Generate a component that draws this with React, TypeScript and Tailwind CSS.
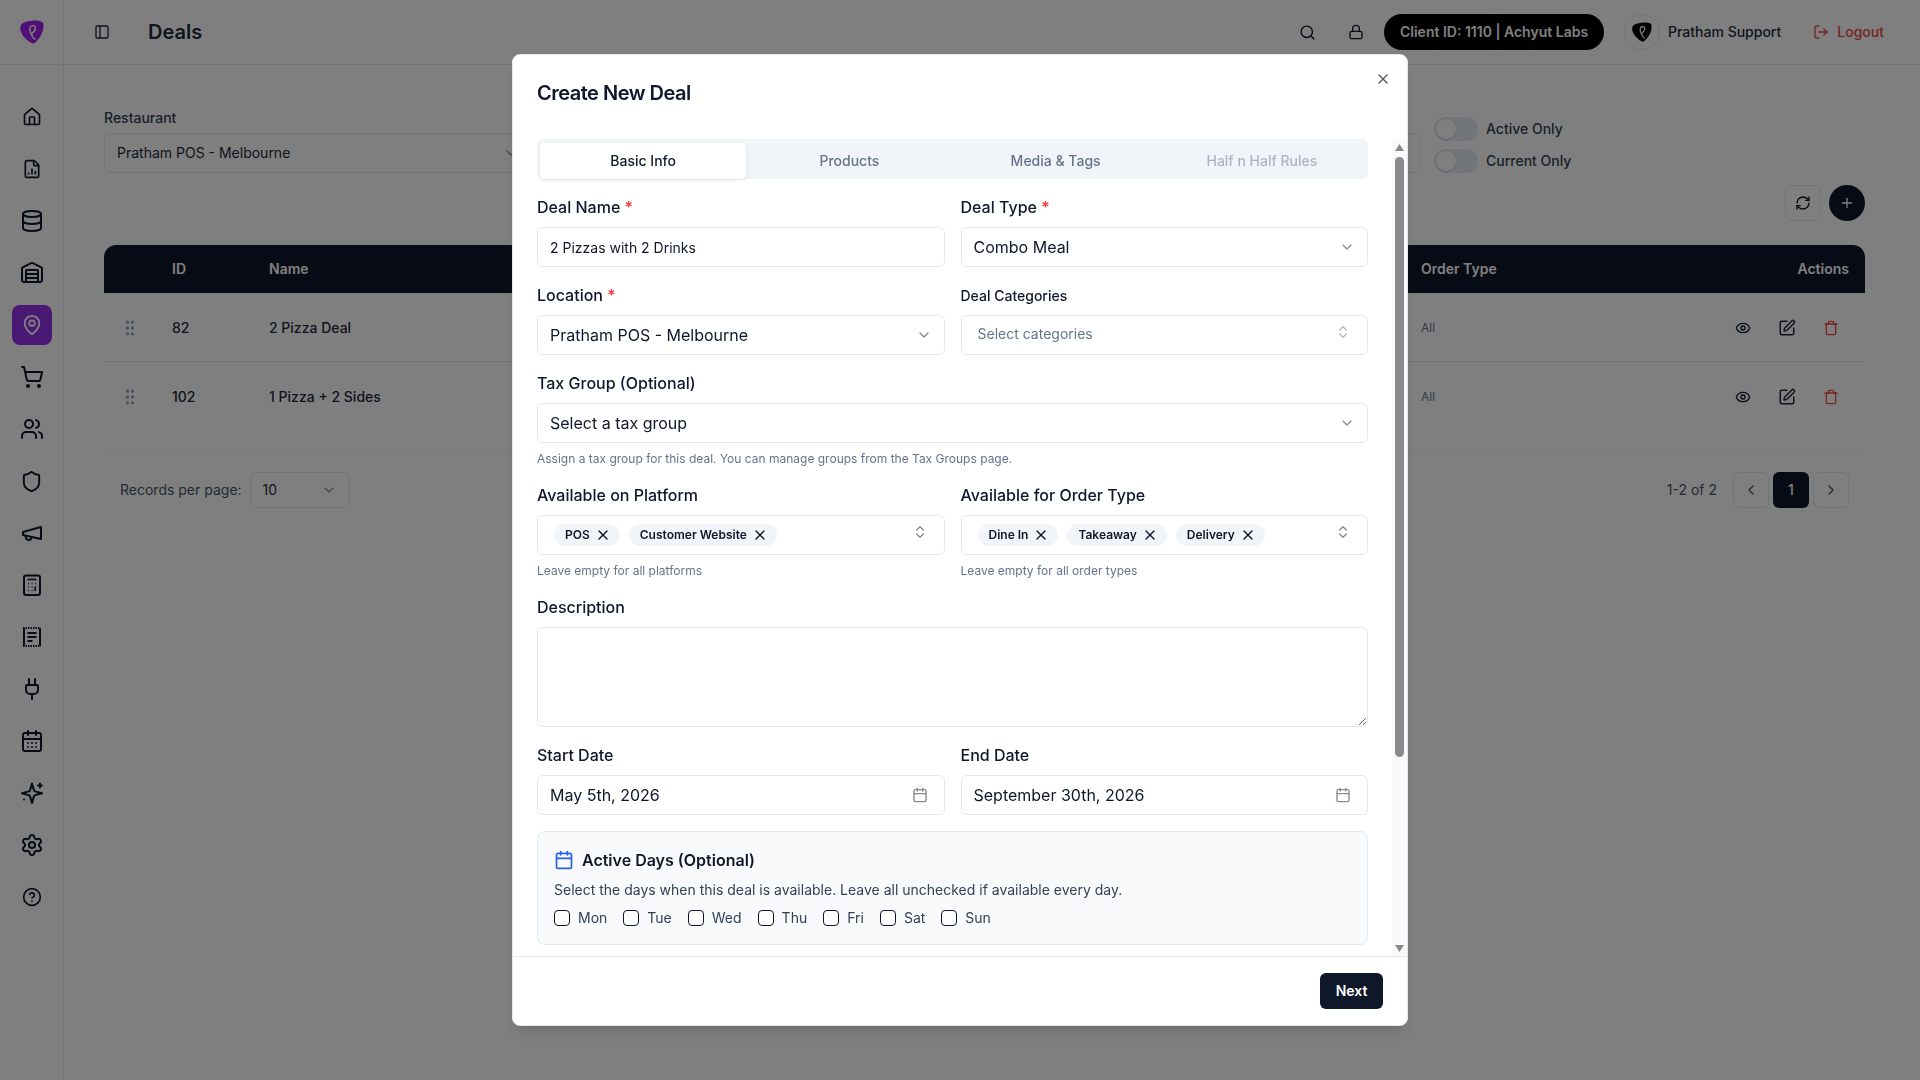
import React from "react";
import {
  House, FileChartColumn, Database, Warehouse, MapPin, ShoppingCart, Users, Shield, Plug,
  CalendarDays, Settings, CircleHelp, PanelLeft, Search, Lock, LogOut, ChevronDown, ChevronsUpDown,
  ChevronLeft, ChevronRight, Calendar, X, GripVertical, Eye, SquarePen, Trash, RefreshCw, Plus,
} from "lucide-react";

function Pick({ fill, size }: { fill: string; size: number }) {
  return (
    <svg width={size} height={size} viewBox="0 0 24 24">
      <path d="M2 3.5C8 .3 18 -.5 23 2.4c2.2 7-3 16.8-9.5 21.4C7 21.8 -1.8 12.4 .6 6c.2-1 .6-1.8 1.4-2.5Z" fill={fill} />
      <path d="M12.5 15.5C8.8 12.5 9 6 12.6 5.6c3.7-.3 3.7 5-.3 7.2-1.5 1.2-.4 4.5 2.6 6.4" fill="none" stroke="#fff" strokeWidth="1.4" strokeLinecap="round" />
    </svg>
  );
}

function CalcIcon() {
  return (
    <svg width="24" height="24" viewBox="0 0 24 24" fill="none" stroke="currentColor" strokeWidth="2">
      <rect x="4" y="2.5" width="16" height="19.5" rx="2" />
      <path d="M7.5 6.5h9" strokeWidth="1.6" />
      <path d="M8 10.5h.9M11.6 10.5h.9M15.2 10.5h.9M8 14h.9M11.6 14h.9M15.2 14h.9M8 17.5h.9M11.6 17.5h.9M15.2 14v4" strokeWidth="1.6" />
    </svg>
  );
}

function ReceiptIcon() {
  return (
    <svg width="24" height="24" viewBox="0 0 24 24" fill="none" stroke="currentColor" strokeWidth="2">
      <path d="M4 3.5v17M20 3.5v17" />
      <path d="M3 3h18M3 21h18" strokeDasharray="1.5 1" />
      <path d="M7.5 8h9M7.5 12h9M7.5 16h5" strokeWidth="1.8" />
    </svg>
  );
}

function MegaphoneIcon() {
  return (
    <svg width="24" height="24" viewBox="0 0 24 24" fill="none" stroke="currentColor" strokeWidth="2" strokeLinecap="round" strokeLinejoin="round">
      <path d="m3 11 18-5v12L3 14v-3z" />
      <path d="M11.6 16.8a3 3 0 1 1-5.8-1.6" />
    </svg>
  );
}

function SparkleIcon() {
  return (
    <svg width="24" height="24" viewBox="0 0 24 24" fill="none" stroke="currentColor" strokeWidth="2" strokeLinecap="round" strokeLinejoin="round">
      <path d="m12 2.5-1.9 6.6a2 2 0 0 1-1.3 1.3L2 12.2l6.8 1.9a2 2 0 0 1 1.3 1.3l1.9 6.6 1.9-6.6a2 2 0 0 1 1.3-1.3l6.8-1.9-6.8-1.8a2 2 0 0 1-1.3-1.3L12 2.5Z" />
      <path d="M20 2.5v4M18 4.5h4" />
      <path d="M4 18.5h.01" />
    </svg>
  );
}

const navIcons: React.ReactNode[] = [
  <House size={20} />,
  <FileChartColumn size={20} />,
  <Database size={24} />,
  <Warehouse size={24} />,
  <MapPin size={22} />,
  <ShoppingCart size={24} />,
  <Users size={24} />,
  <Shield size={23} />,
  <MegaphoneIcon />,
  <CalcIcon />,
  <ReceiptIcon />,
  <Plug size={24} />,
  <CalendarDays size={24} />,
  <SparkleIcon />,
  <Settings size={24} />,
  <CircleHelp size={20} />,
];

function Label({ text, req, small }: { text: string; req?: boolean; small?: boolean }) {
  return (
    <div className={`${small ? "text-sm pt-px" : "text-base"} h-6 leading-6 font-medium text-[#0f172a] mb-2`}>
      {text}
      {req && <span className="text-red-500"> *</span>}
    </div>
  );
}

function SelectBox({ value }: { value: string }) {
  return (
    <div className="h-10 flex items-center justify-between px-3 border border-[#e2e8f0] rounded-md bg-white text-base text-[#0f172a]">
      <span>{value}</span>
      <ChevronDown size={16} className="opacity-50" />
    </div>
  );
}

function DateBox({ value }: { value: string }) {
  return (
    <div className="h-10 flex items-center justify-between pl-3 pr-4 border border-[#e2e8f0] rounded-md bg-white text-base text-[#0f172a]">
      <span>{value}</span>
      <Calendar size={16} className="opacity-50" />
    </div>
  );
}

function Chip({ text }: { text: string }) {
  return (
    <span className="h-[22px] flex items-center gap-[5px] pl-[11px] pr-[9px] rounded-full bg-[#f1f5f9] text-xs font-semibold text-[#0f172a]">
      {text}
      <X size={16} strokeWidth={2} />
    </span>
  );
}

function MultiBox({ children }: { children: React.ReactNode }) {
  return (
    <div className="h-10 flex items-center justify-between pl-4 pr-4 border border-[#e2e8f0] rounded-md bg-white">
      <div className="flex items-center gap-[9px]">{children}</div>
      <ChevronsUpDown size={16} className="opacity-50 -mt-[6px]" />
    </div>
  );
}

function Toggle({ label }: { label: string }) {
  return (
    <div className="flex items-center gap-2">
      <span className="w-11 h-6 rounded-full bg-[#e2e8f0] p-0.5 flex">
        <span className="w-5 h-5 rounded-full bg-white shadow" />
      </span>
      <span className="text-sm font-medium text-[#334155]">{label}</span>
    </div>
  );
}

function Row({ id, name, last }: { id: string; name: string; last?: boolean }) {
  return (
    <div className={`grid grid-cols-[68px_97px_1fr_444px] h-[69px] items-center text-sm font-medium text-[#1e293b] ${last ? "" : "pt-px border-b border-[#e2e8f0]"}`}>
      <div className="pl-4 text-[#94a3b8]"><GripVertical size={20} /></div>
      <div>{id}</div>
      <div>{name}</div>
      <div className="flex items-center justify-between pr-[26px]">
        <span className="text-xs font-normal text-[#64748b]">All</span>
        <div className="flex items-center gap-[27px]">
          <Eye size={16} className="text-[#0f172a]" />
          <SquarePen size={18} className="text-[#1e293b]" />
          <Trash size={16} className="text-[#ef4444]" />
        </div>
      </div>
    </div>
  );
}

function ScrollRail() {
  return (
    <div className="w-[15px] shrink-0 bg-[#fafafa] flex flex-col items-center pt-[5px] pb-1">
      <svg width="9" height="7" viewBox="0 0 9 7" className="shrink-0"><path d="M4.5 0 9 7H0Z" fill="#8a8a8a" /></svg>
      <div className="mt-[6px] w-[9px] h-[600px] shrink-0 rounded-full bg-[#8a8a8a]" />
      <div className="flex-1" />
      <svg width="9" height="7" viewBox="0 0 9 7" className="shrink-0"><path d="M0 0h9L4.5 7Z" fill="#8a8a8a" /></svg>
    </div>
  );
}

export default function App() {
  const days = ["Mon", "Tue", "Wed", "Thu", "Fri", "Sat", "Sun"];
  return (
    <div className="h-screen w-screen overflow-hidden bg-white flex flex-col [font-family:Inter,sans-serif] text-[#0f172a]">
      <header className="h-[65px] shrink-0 border-b border-[#e2e8f0] flex items-center">
        <div className="w-16 h-full border-r border-[#e2e8f0] flex items-center justify-center">
          <Pick fill="#a020f0" size={24} />
        </div>
        <PanelLeft size={16} className="ml-[30px] text-[#1e293b]" />
        <h1 className="ml-[38px] text-xl font-semibold text-[#1e293b]">Deals</h1>
        <div className="ml-auto flex items-center pr-9">
          <Search size={17} className="text-[#0f172a]" />
          <Lock size={16} className="ml-8 text-[#0f172a]" />
          <div className="ml-5 h-9 w-[220px] rounded-full bg-black flex items-center justify-center text-sm font-semibold text-white">
            Client ID: 1110 | Achyut Labs
          </div>
          <div className="ml-5 w-9 h-9 rounded-full border border-[#e2e8f0] flex items-center justify-center">
            <Pick fill="#000" size={20} />
          </div>
          <span className="ml-2 text-sm font-medium text-[#1e293b]">Pratham Support</span>
          <div className="ml-8 flex items-center gap-2 text-sm font-medium text-[#ef4444]">
            <LogOut size={16} />
            Logout
          </div>
        </div>
      </header>

      <div className="flex-1 flex min-h-0">
        <aside className="w-16 shrink-0 border-r border-[#e2e8f0] flex flex-col items-center gap-3 pt-8 text-[#0f172a]">
          {navIcons.map((icon, i) => (
            <div key={i} className={`w-10 h-10 shrink-0 rounded-lg flex items-center justify-center ${i === 4 ? "bg-[#9333ea] text-white" : ""}`}>
              {icon}
            </div>
          ))}
        </aside>

        <main className="flex-1 min-w-0 pl-10 pr-[55px] pt-[43px]">
          <div className="flex">
            <div className="flex-1 grid grid-cols-3 gap-4">
              <div>
                <div className="text-sm font-medium text-[#334155] h-5 leading-5 mb-[5px]">Restaurant</div>
                <div className="h-10 flex items-center justify-between px-3 border border-[#e2e8f0] rounded-md text-sm text-[#1e293b]">
                  <span>Pratham POS - Melbourne</span>
                  <ChevronDown size={16} className="opacity-50" />
                </div>
              </div>
              <div />
              <div className="pt-[25px]"><div className="h-10 border border-[#e2e8f0] rounded-md" /></div>
            </div>
            <div className="ml-[13px] w-[431px] self-end flex flex-col gap-2">
              <Toggle label="Active Only" />
              <Toggle label="Current Only" />
            </div>
          </div>

          <div className="mt-3 flex justify-end gap-2">
            <div className="w-9 h-9 rounded-md border border-[#e2e8f0] flex items-center justify-center text-[#0f172a]"><RefreshCw size={16} /></div>
            <div className="w-9 h-9 rounded-full bg-[#0f172a] flex items-center justify-center text-white"><Plus size={16} /></div>
          </div>

          <div className="mt-6 border-b border-[#f1f5f9] h-[211px]">
            <div className="grid grid-cols-[68px_97px_1fr_444px] h-12 items-center bg-[#0f172a] rounded-t-xl text-sm font-semibold text-white">
              <div />
              <div>ID</div>
              <div>Name</div>
              <div className="flex justify-between pr-4"><span>Order Type</span><span>Actions</span></div>
            </div>
            <Row id="82" name="2 Pizza Deal" />
            <Row id="102" name="1 Pizza + 2 Sides" last />
          </div>

          <div className="mt-4 flex items-center justify-between px-4">
            <div className="flex items-center gap-2 text-sm text-[#475569]">
              <span>Records per page:</span>
              <div className="w-[100px] h-9 flex items-center justify-between pl-3 pr-3 border border-[#e2e8f0] rounded-md text-[#1e293b]">
                <span>10</span>
                <ChevronDown size={16} className="opacity-50" />
              </div>
            </div>
            <div className="flex items-center text-sm text-[#475569]">
              <span className="mr-4">1-2 of 2</span>
              <div className="flex gap-1">
                <div className="w-9 h-9 rounded-md border border-[#e2e8f0] flex items-center justify-center"><ChevronLeft size={16} /></div>
                <div className="w-9 h-9 rounded-md bg-[#0f172a] text-white font-medium flex items-center justify-center">1</div>
                <div className="w-9 h-9 rounded-md border border-[#e2e8f0] flex items-center justify-center"><ChevronRight size={16} /></div>
              </div>
            </div>
          </div>
        </main>
      </div>

      <div className="fixed inset-0 bg-black/50 flex items-center justify-center">
        <div className="relative w-[896px] h-[972px] bg-white border border-[#e2e8f0] rounded-lg shadow-lg flex flex-col">
          <div className="absolute right-4 top-4 opacity-70"><X size={16} /></div>
          <div className="h-[84px] shrink-0 pt-6 pl-6">
            <h2 className="text-xl leading-7 font-semibold tracking-tight text-[#0f172a]">Create New Deal</h2>
          </div>
          <div className="flex-1 min-h-0 flex">
            <div className="flex-1 min-w-0 overflow-hidden pl-6 pr-6">
              <div className="h-10 mb-4 bg-[#f1f5f9] rounded-md pt-1 px-[3px] grid grid-cols-4 text-sm font-medium text-[#64748b]">
                <div className="bg-white rounded-sm shadow-sm flex items-center justify-center text-[#0f172a]">Basic Info</div>
                <div className="flex items-center justify-center">Products</div>
                <div className="flex items-center justify-center">Media &amp; Tags</div>
                <div className="flex items-center justify-center opacity-50">Half n Half Rules</div>
              </div>

              <div className="grid grid-cols-2 gap-x-4 gap-y-4">
                <div>
                  <Label text="Deal Name" req />
                  <input readOnly value="2 Pizzas with 2 Drinks" className="w-full h-10 px-3 border border-[#e2e8f0] rounded-md text-sm text-[#0f172a] bg-white outline-none" />
                </div>
                <div>
                  <Label text="Deal Type" req />
                  <SelectBox value="Combo Meal" />
                </div>
                <div>
                  <Label text="Location" req />
                  <SelectBox value="Pratham POS - Melbourne" />
                </div>
                <div>
                  <Label text="Deal Categories" small />
                  <div className="h-10 flex items-center justify-between pl-4 pr-4 border border-[#e2e8f0] rounded-md bg-white text-sm text-[#64748b]">
                    <span className="-mt-0.5">Select categories</span>
                    <ChevronsUpDown size={16} className="opacity-50 -mt-[6px]" />
                  </div>
                </div>
                <div className="col-span-2">
                  <Label text="Tax Group (Optional)" />
                  <SelectBox value="Select a tax group" />
                  <p className="mt-2 text-xs leading-4 text-[#64748b]">Assign a tax group for this deal. You can manage groups from the Tax Groups page.</p>
                </div>
                <div>
                  <Label text="Available on Platform" />
                  <MultiBox>
                    <Chip text="POS" />
                    <Chip text="Customer Website" />
                  </MultiBox>
                  <p className="mt-2 text-xs leading-4 text-[#64748b]">Leave empty for all platforms</p>
                </div>
                <div>
                  <Label text="Available for Order Type" />
                  <MultiBox>
                    <Chip text="Dine In" />
                    <Chip text="Takeaway" />
                    <Chip text="Delivery" />
                  </MultiBox>
                  <p className="mt-2 text-xs leading-4 text-[#64748b]">Leave empty for all order types</p>
                </div>
                <div className="col-span-2">
                  <Label text="Description" />
                  <textarea readOnly className="block w-full h-[100px] border border-[#e2e8f0] rounded-md bg-white outline-none" />
                </div>
                <div>
                  <Label text="Start Date" />
                  <DateBox value="May 5th, 2026" />
                </div>
                <div>
                  <Label text="End Date" />
                  <DateBox value="September 30th, 2026" />
                </div>
                <div className="col-span-2 border border-[#e2e8f0] rounded-lg bg-[#f8fafc] p-4">
                  <div className="h-6 flex items-center gap-2 text-base font-semibold text-[#0f172a]">
                    <Calendar size={20} className="text-[#2563eb]" />
                    Active Days (Optional)
                  </div>
                  <p className="mt-2 text-sm leading-5 text-[#334155]">Select the days when this deal is available. Leave all unchecked if available every day.</p>
                  <div className="mt-2 h-5 flex items-center gap-4">
                    {days.map((d) => (
                      <div key={d} className="flex items-center gap-2 text-sm text-[#334155]">
                        <span className="w-4 h-4 rounded-[4px] border border-[#0f172a] bg-white" />
                        {d}
                      </div>
                    ))}
                  </div>
                </div>
              </div>
            </div>
            <ScrollRail />
          </div>
          <div className="h-[69px] shrink-0 border-t border-[#e2e8f0] pt-4 pr-6 flex justify-end">
            <button className="w-[63px] h-9 rounded-md bg-[#0f172a] text-white text-sm font-semibold">Next</button>
          </div>
        </div>
      </div>
    </div>
  );
}
